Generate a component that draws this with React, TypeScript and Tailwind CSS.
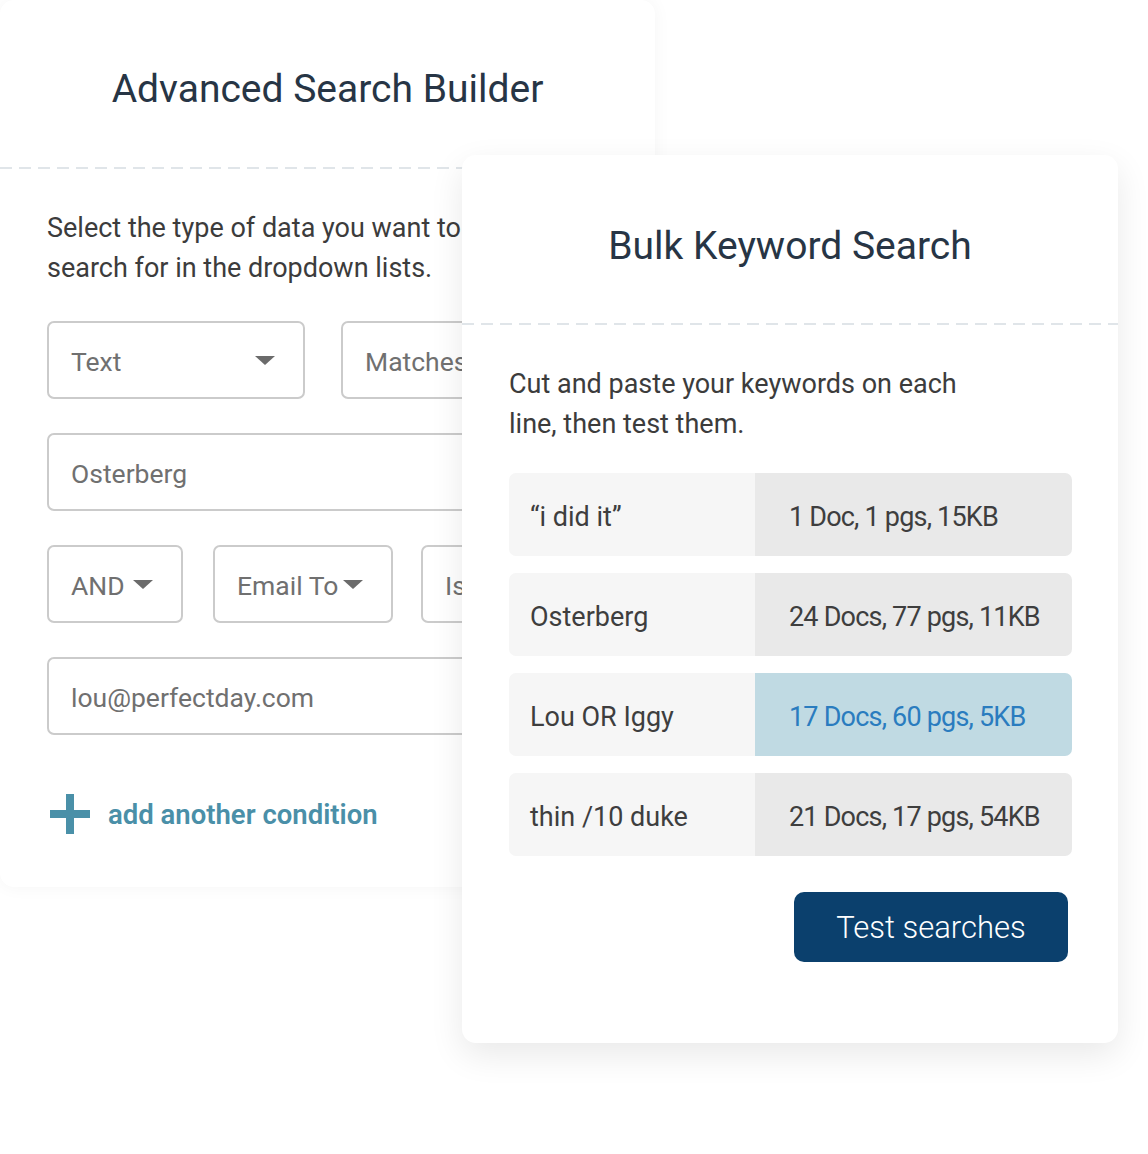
const font = "font-['Roboto','Liberation_Sans',sans-serif]";

function Caret() {
  return (
    <svg width="20" height="9" viewBox="0 0 20 9" className="shrink-0">
      <path d="M0 0 L20 0 L10 9 Z" fill="#6b6b6b" />
    </svg>
  );
}

function Dashes() {
  return (
    <div className="h-[2px] w-full bg-[repeating-linear-gradient(90deg,#e0e5e9_0px,#e0e5e9_12px,transparent_12px,transparent_19px)]" />
  );
}

function Field({
  label,
  caret,
  className,
}: {
  label: string;
  caret?: boolean;
  className: string;
}) {
  return (
    <div
      className={`h-[78px] shrink-0 rounded-[7px] border-2 border-[#cbcbcb] flex items-center pl-[22px] pr-[28px] text-[26.5px] text-[#707070] ${className}`}
    >
      <span className="whitespace-nowrap pt-[3px]">{label}</span>
      {caret && (
        <span className="ml-auto pl-[1px]">
          <Caret />
        </span>
      )}
    </div>
  );
}

const rows = [
  { term: "“i did it”", result: "1 Doc, 1 pgs, 15KB" },
  { term: "Osterberg", result: "24 Docs, 77 pgs, 11KB" },
  { term: "Lou OR Iggy", result: "17 Docs, 60 pgs, 5KB", active: true },
  { term: "thin /10 duke", result: "21 Docs, 17 pgs, 54KB" },
];

export default function App() {
  return (
    <div className={`relative w-[1148px] h-[1154px] bg-white overflow-hidden ${font}`}>
      {/* Advanced Search Builder card */}
      <div className="w-[655px] h-[887px] rounded-[14px] bg-white shadow-[0_0_18px_rgba(0,0,0,0.045)]">
        <div className="h-[167px] flex items-center justify-center pt-[12px]">
          <h1 className="text-[39px] text-[#273545]">Advanced Search Builder</h1>
        </div>
        <Dashes />
        <div className="pl-[47px] pt-[39px]">
          <p className="text-[27px] leading-[40px] text-[#3c3c3c] whitespace-nowrap">
            Select the type of data you want to
            <br />
            search for in the dropdown lists.
          </p>
          <div className="mt-[33px] flex flex-col gap-[34px]">
            <div className="flex gap-[36px]">
              <Field label="Text" caret className="w-[258px]" />
              <Field label="Matches" caret className="w-[258px]" />
            </div>
            <Field label="Osterberg" className="w-[560px]" />
            <div className="flex">
              <Field label="AND" caret className="w-[136px]" />
              <Field label="Email To" caret className="w-[180px] ml-[30px]" />
              <Field label="Is" caret className="w-[180px] ml-[28px]" />
            </div>
            <Field label="lou@perfectday.com" className="w-[560px]" />
          </div>
          <div className="mt-[57px] flex items-center gap-[18px] pl-[3px]">
            <svg width="40" height="40" viewBox="0 0 40 40">
              <rect x="16" y="0" width="8" height="40" fill="#4a90a8" />
              <rect x="0" y="16" width="40" height="8" fill="#4a90a8" />
            </svg>
            <span className="text-[27.5px] font-semibold text-[#4a8fa8] pt-[2px]">add another condition</span>
          </div>
        </div>
      </div>

      {/* Bulk Keyword Search card */}
      <div className="absolute left-[462px] top-[155px] w-[656px] h-[888px] rounded-[14px] bg-white shadow-[0_12px_34px_rgba(0,0,0,0.09)]">
        <div className="h-[168px] flex items-center justify-center pt-[14px]">
          <h2 className="text-[39px] text-[#273545]">Bulk Keyword Search</h2>
        </div>
        <Dashes />
        <div className="pl-[47px] pr-[46px] pt-[39px]">
          <p className="text-[27px] leading-[40px] text-[#3c3c3c]">
            Cut and paste your keywords on each
            <br />
            line, then test them.
          </p>
          <div className="mt-[29px] flex flex-col gap-[17px]">
            {rows.map((r) => (
              <div key={r.term} className="flex h-[83px] rounded-[7px] overflow-hidden text-[27px] text-[#3e3e3e]">
                <div className="w-[246px] bg-[#f6f6f6] flex items-center pl-[21px] pt-[5px]">
                  {r.term}
                </div>
                <div
                  className={`flex-1 flex items-center pl-[34px] pt-[5px] tracking-[-0.8px] ${
                    r.active ? "bg-[#c0dae3] text-[#2a7cbf]" : "bg-[#e9e9e9]"
                  }`}
                >
                  {r.result}
                </div>
              </div>
            ))}
          </div>
          <div className="mt-[36px] flex justify-end pr-[4px]">
            <button className="w-[274px] h-[70px] rounded-[10px] bg-[#0b406d] text-white text-[31px] font-light pt-[3px]">
              Test searches
            </button>
          </div>
        </div>
      </div>
    </div>
  );
}
